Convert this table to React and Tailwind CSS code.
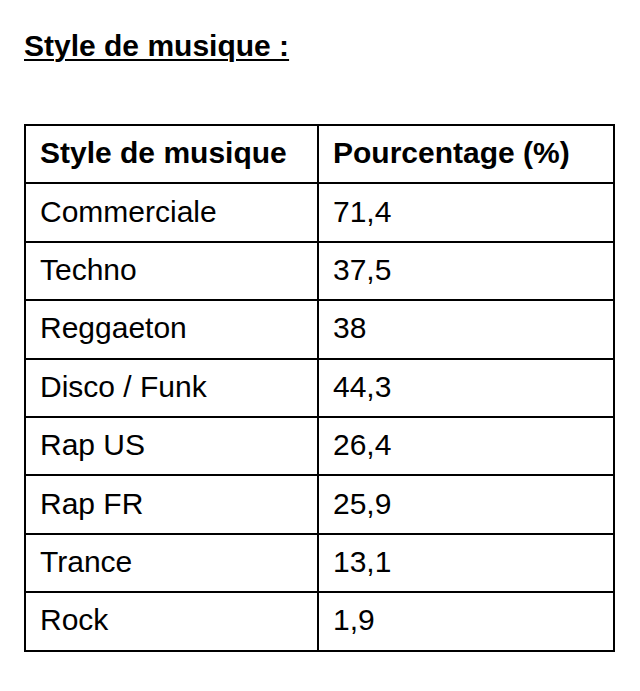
export default function App() {
  const rows = [
    ["Commerciale", "71,4"],
    ["Techno", "37,5"],
    ["Reggaeton", "38"],
    ["Disco / Funk", "44,3"],
    ["Rap US", "26,4"],
    ["Rap FR", "25,9"],
    ["Trance", "13,1"],
    ["Rock", "1,9"],
  ];
  return (
    <div className="w-[640px] h-[691px] bg-white text-black font-['Liberation_Sans',Arial,sans-serif]">
      <div className="pl-[24px] pt-[29px]">
        <h1 className="text-[30px] font-bold underline decoration-2 underline-offset-[3px] leading-[34px]">Style de musique :</h1>
      </div>
      <table className="ml-[24px] mt-[61px] w-[591px] border-collapse border-2 border-black text-[30px]">
        <tbody>
          <tr className="h-[58.4px]">
            <th className="w-[293px] border-2 border-black text-left font-bold pl-[14px] pt-0 pb-[3px]">Style de musique</th>
            <th className="border-2 border-black text-left font-bold pl-[14px] pt-0 pb-[3px]">Pourcentage (%)</th>
          </tr>
          {rows.map(([a, b]) => (
            <tr key={a} className="h-[58.4px]">
              <td className="border-2 border-black pl-[14px] pt-0 pb-[3px]">{a}</td>
              <td className="border-2 border-black pl-[14px] pt-0 pb-[3px]">{b}</td>
            </tr>
          ))}
        </tbody>
      </table>
    </div>
  );
}
